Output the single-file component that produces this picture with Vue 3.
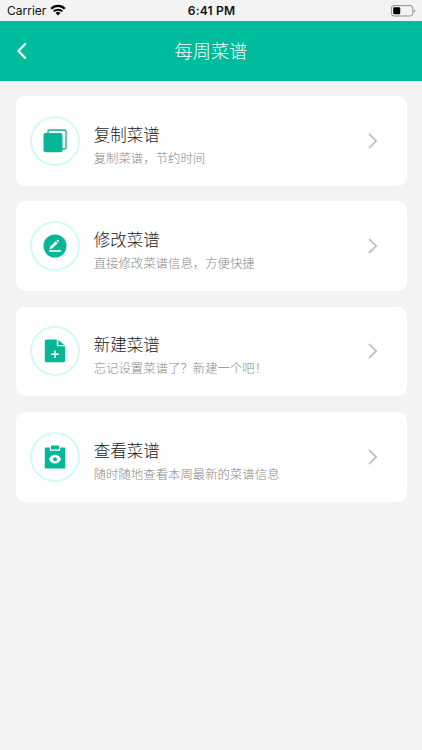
<script setup>
const items = [
  { icon: 'copy', title: '复制菜谱', desc: '复制菜谱，节约时间' },
  { icon: 'edit', title: '修改菜谱', desc: '直接修改菜谱信息，方便快捷' },
  { icon: 'add', title: '新建菜谱', desc: '忘记设置菜谱了？新建一个吧！' },
  { icon: 'view', title: '查看菜谱', desc: '随时随地查看本周最新的菜谱信息' },
]
</script>

<template>
  <div class="screen">
    <div class="status">
      <div class="carrier">
        <span>Carrier</span>
        <svg class="wifi" viewBox="0 0 16 12" width="16" height="12">
          <path d="M1.2 4.7a9.6 9.6 0 0 1 13.6 0" fill="none" stroke="#000" stroke-width="2.1" />
          <path d="M3.7 7.4a6.1 6.1 0 0 1 8.6 0" fill="none" stroke="#000" stroke-width="2" />
          <path d="M8 11.4 5.6 9a3.4 3.4 0 0 1 4.8 0z" fill="#000" />
        </svg>
      </div>
      <span class="time">6:41 PM</span>
      <svg class="battery" viewBox="0 0 26 12" width="26" height="12">
        <rect x="1.4" y="0.6" width="21.4" height="10.4" rx="2.6" fill="none" stroke="#8e8e8e" stroke-width="1" />
        <rect x="3.2" y="2.3" width="7" height="7" rx="1" fill="#000" />
        <path d="M24.2 4v3.8c1.3-.6 1.3-3.2 0-3.8z" fill="#8e8e8e" />
      </svg>
    </div>

    <header class="bar">
      <svg class="back" viewBox="0 0 12 18" width="12" height="18">
        <path d="M9.2 2 2.4 9l6.8 7" fill="none" stroke="#fff" stroke-width="2.3" stroke-linecap="round" stroke-linejoin="round" />
      </svg>
      <h1>每周菜谱</h1>
      <span></span>
    </header>

    <main class="list">
      <section v-for="item in items" :key="item.icon" class="card">
        <div class="ring">
          <svg viewBox="0 0 24 24" width="24" height="24">
            <g v-if="item.icon === 'copy'">
              <path d="M5 4V2.3Q5 1 6.3 1h15.4Q23 1 23 2.3V18.7Q23 20 21.7 20H19" fill="none" stroke="#06b797" stroke-width="1.3" />
              <rect x="0.5" y="3.9" width="19" height="19.4" rx="2" fill="#06b797" />
            </g>
            <g v-else-if="item.icon === 'edit'">
              <circle cx="12" cy="12" r="11.5" fill="#06b797" />
              <path d="M6.5 17h11.2" stroke="#fff" stroke-width="1.4" stroke-linecap="round" />
              <path d="M6.5 15.3 7.2 12.6 12.6 7.2 14.6 9.2 9.2 14.6z" fill="#fff" />
              <path d="M13.3 6.5 14.1 5.9Q14.7 5.5 15.3 6.1L15.7 6.5Q16.2 7.1 15.8 7.7L15.2 8.4z" fill="#fff" />
            </g>
            <g v-else-if="item.icon === 'add'">
              <path d="M3.6.5H13.8V7.2H22V21.4Q22 23.3 20.1 23.3H3.6Q1.8 23.3 1.8 21.4V2.4Q1.8.5 3.6.5z" fill="#06b797" />
              <path d="M15.3.8 21.3 6H15.3z" fill="#06b797" />
              <path d="M12 11.4v7.6M8.2 15.2h7.6" stroke="#fff" stroke-width="1.5" />
            </g>
            <g v-else>
              <path d="M1.8 2.6H6.8V5.8H17.2V2.6H22.2V23.4H1.8z" fill="#06b797" />
              <rect x="8" y="0.6" width="8" height="4" rx="0.7" fill="#06b797" />
              <path d="M6 14.2C8.5 8.4 15.5 8.4 18 14.2 15.5 20 8.5 20 6 14.2z" fill="#fff" />
              <circle cx="12" cy="14.2" r="2" fill="#06b797" />
            </g>
          </svg>
        </div>
        <div class="text">
          <h2>{{ item.title }}</h2>
          <p>{{ item.desc }}</p>
        </div>
        <svg class="arrow" viewBox="0 0 12 18" width="12" height="18">
          <path d="M2 2l7.2 7L2 16" fill="none" stroke="#c5c5c5" stroke-width="2" />
        </svg>
      </section>
    </main>
  </div>
</template>

<style>
body {
  background: #f3f3f3;
}
</style>

<style scoped>
.screen {
  box-sizing: border-box;
  height: 750px;
  overflow: hidden;
  background: #f3f3f3;
  font-family: Inter, "Noto Sans CJK SC", sans-serif;
}
.status {
  display: grid;
  grid-template-columns: 1fr auto 1fr;
  align-items: center;
  box-sizing: border-box;
  height: 21px;
  padding: 1px 6px 0 7px;
  font-size: 12px;
  line-height: 20px;
  color: #111;
}
.carrier {
  display: flex;
  align-items: center;
  gap: 4px;
}
.wifi {
  margin-top: -2px;
}
.time {
  font-weight: 600;
  letter-spacing: 0.2px;
}
.battery {
  justify-self: end;
  margin-top: -1px;
}
.bar {
  display: grid;
  grid-template-columns: 1fr auto 1fr;
  align-items: center;
  box-sizing: border-box;
  height: 60px;
  padding: 0 16px;
  background: #00bb9c;
}
h1 {
  margin: 0;
  padding-bottom: 2px;
  font-family: "Noto Sans CJK SC", sans-serif;
  font-weight: 300;
  font-size: 18.2px;
  line-height: 28px;
  color: #fff;
}
.list {
  display: flex;
  flex-direction: column;
  gap: 15.5px;
  padding: 15px 15.5px 0;
}
.card {
  display: flex;
  align-items: center;
  box-sizing: border-box;
  height: 89.8px;
  padding: 0 28px 0 14.2px;
  background: #fff;
  border-radius: 9px;
}
.ring {
  display: flex;
  align-items: center;
  justify-content: center;
  box-sizing: border-box;
  width: 50px;
  height: 50px;
  border: 2px solid #d2fcf3;
  border-radius: 50%;
}
.text {
  flex: 1;
  padding: 8.6px 0 0 14px;
  font-family: "Noto Sans CJK SC", sans-serif;
}
h2 {
  margin: 0;
  font-weight: 300;
  font-size: 16.5px;
  line-height: 25px;
  color: #1a1a1a;
}
p {
  margin: 0;
  font-weight: 300;
  font-size: 12.4px;
  line-height: 22px;
  color: #888;
}
</style>
